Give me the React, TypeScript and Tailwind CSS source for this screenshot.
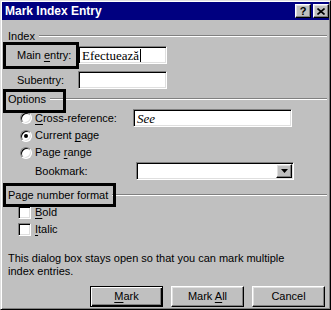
import type { ReactNode } from 'react';

const sunken =
  'border border-t-[#808080] border-l-[#808080] border-r-white border-b-white bg-white shadow-[inset_1px_1px_0_#000,inset_-1px_-1px_0_#dfdfdf]';
const raised =
  'border border-t-white border-l-white border-r-black border-b-black bg-[#c0c0c0] shadow-[inset_-1px_-1px_0_#808080,inset_1px_1px_0_#dfdfdf]';

function U({ children }: { children: ReactNode }) {
  return <span className="underline decoration-1 underline-offset-[2px]">{children}</span>;
}

function GroupHeader({ label }: { label: string }) {
  return (
    <div className="flex h-[14px] items-center">
      <span>{label}</span>
      <div className="ml-[4px] h-[2px] flex-1 border-t border-b border-t-[#808080] border-b-white" />
    </div>
  );
}

function Radio({ checked }: { checked?: boolean }) {
  return (
    <div className="relative h-[12px] w-[12px] shrink-0 rounded-full border border-t-[#808080] border-l-[#808080] border-r-white border-b-white bg-white shadow-[inset_1px_1px_0_#000,inset_-1px_-1px_0_#dfdfdf]">
      {checked ? <div className="absolute left-[3px] top-[3px] h-[4px] w-[4px] rounded-full bg-black" /> : null}
    </div>
  );
}

function Checkbox() {
  return <div className={`h-[13px] w-[13px] shrink-0 ${sunken}`} />;
}

function Button({ children, primary }: { children: ReactNode; primary?: boolean }) {
  return (
    <button
      className={`flex h-[21px] w-[73px] items-center justify-center ${
        primary
          ? 'border border-black bg-[#c0c0c0] shadow-[inset_1px_1px_0_#fff,inset_-1px_-1px_0_#000,inset_-2px_-2px_0_#808080]'
          : raised
      }`}
    >
      <span>{children}</span>
    </button>
  );
}

export default function App() {
  return (
    <div className="relative h-[310px] w-[331px] overflow-hidden border border-t-[#dfdfdf] border-l-[#dfdfdf] border-r-black border-b-black bg-[#c0c0c0] p-px font-['Liberation_Sans',Arial,sans-serif] text-[11px] leading-[13px] text-black shadow-[inset_1px_1px_0_#fff,inset_-1px_-1px_0_#808080]">
      {/* title bar */}
      <div className="flex h-[18px] items-center bg-[#000080] pl-[3px]">
        <span className="flex-1 text-[12px] font-bold text-white">Mark Index Entry</span>
        <div className="flex gap-[2px]">
          <div className={`flex h-[14px] w-[16px] items-center justify-center text-[11px] font-bold ${raised}`}>?</div>
          <div className={`flex h-[14px] w-[16px] items-center justify-center ${raised}`}>
            <svg width="8" height="7" viewBox="0 0 8 7">
              <path d="M0.5 0.5 L7.5 6.5 M7.5 0.5 L0.5 6.5" stroke="#000" strokeWidth="1.6" />
            </svg>
          </div>
        </div>
      </div>

      <div className="pl-[6px] pr-[2px]">
        <div className="mt-[9px]">
          <GroupHeader label="Index" />
        </div>

        <div className="mt-[3px] flex h-[18px] items-center pl-[9px]">
          <span className="w-[61px]">
            Main <U>e</U>ntry:
          </span>
          <div className={`flex h-[18px] w-[89px] items-center pl-[3px] font-['Liberation_Serif',serif] text-[13px] ${sunken}`}>
            Efectuează<span className="ml-px h-[13px] w-px bg-black" />
          </div>
        </div>

        <div className="mt-[7px] flex h-[18px] items-center pl-[9px]">
          <span className="w-[61px]">Subentry:</span>
          <div className={`h-[18px] w-[89px] ${sunken}`} />
        </div>

        <div className="mt-[3px]">
          <GroupHeader label="Options" />
        </div>

        <div className="mt-[3px] flex h-[18px] items-center pl-[12px]">
          <Radio />
          <span className="ml-[3px] w-[98px]">
            <U>C</U>ross-reference:
          </span>
          <div className={`flex h-[18px] w-[159px] items-center pl-[3px] font-['Liberation_Serif',serif] text-[13px] italic ${sunken}`}>
            See
          </div>
        </div>

        <div className="flex h-[17px] items-center pl-[12px]">
          <Radio checked />
          <span className="ml-[3px]">
            Current <U>p</U>age
          </span>
        </div>

        <div className="flex h-[17px] items-center pl-[12px]">
          <Radio />
          <span className="ml-[3px]">
            Page <U>r</U>ange
          </span>
        </div>

        <div className="mt-px flex h-[18px] items-center pl-[27px]">
          <span className="w-[101px]">Bookmark:</span>
          <div className={`flex h-[18px] w-[158px] items-center justify-end pr-[1px] ${sunken}`}>
            <div className={`flex h-[14px] w-[16px] items-center justify-center ${raised}`}>
              <svg width="7" height="4" viewBox="0 0 7 4">
                <path d="M0 0 H7 L3.5 4 Z" fill="#000" />
              </svg>
            </div>
          </div>
        </div>

        <div className="mt-[8px]">
          <GroupHeader label="Page number format" />
        </div>

        <div className="mt-[2px] flex h-[17px] items-center pl-[10px]">
          <Checkbox />
          <span className="ml-[4px]">
            <U>B</U>old
          </span>
        </div>

        <div className="flex h-[17px] items-center pl-[10px]">
          <Checkbox />
          <span className="ml-[4px]">
            <U>I</U>talic
          </span>
        </div>

        <p className="mt-[14px] w-[290px]">
          This dialog box stays open so that you can mark multiple index entries.
        </p>

        <div className="mt-[8px] flex gap-[8px] pl-[82px]">
          <Button primary>
            <U>M</U>ark
          </Button>
          <Button>
            Mark <U>A</U>ll
          </Button>
          <Button>Cancel</Button>
        </div>
      </div>

      {/* annotation boxes drawn over the dialog */}
      <div className="pointer-events-none absolute left-[2px] top-[41px] h-[27px] w-[76px] border-[3px] border-black" />
      <div className="pointer-events-none absolute left-[2px] top-[88px] h-[24px] w-[63px] border-[3px] border-black" />
      <div className="pointer-events-none absolute left-[2px] top-[182px] h-[24px] w-[113px] border-[3px] border-black" />
    </div>
  );
}
